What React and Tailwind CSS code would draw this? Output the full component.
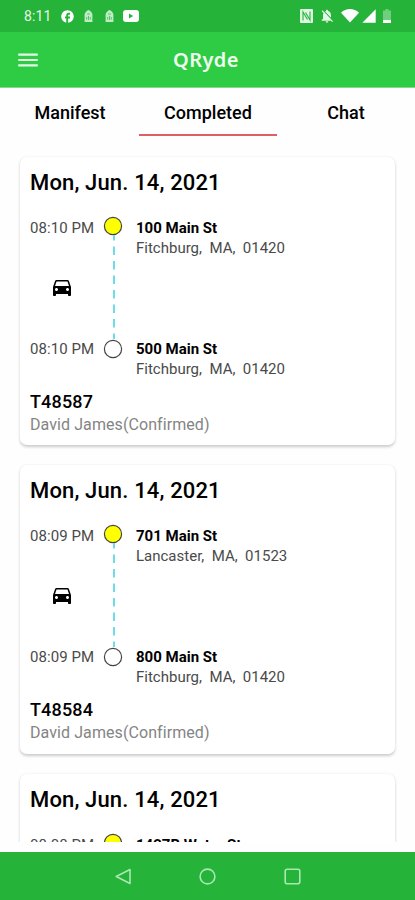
import React, { useState } from 'react';
import { MdDirectionsCar, MdMenu, MdNotificationsOff, MdSignalCellular4Bar, MdFacebook } from 'react-icons/md';

const TABS = ['Manifest', 'Completed', 'Chat'];

const TRIPS = [
  {
    id: 'T48587',
    date: 'Mon, Jun. 14, 2021',
    rider: 'David James(Confirmed)',
    pickup: { time: '08:10 PM', street: '100 Main St', city: 'Fitchburg,  MA,  01420' },
    dropoff: { time: '08:10 PM', street: '500 Main St', city: 'Fitchburg,  MA,  01420' },
  },
  {
    id: 'T48584',
    date: 'Mon, Jun. 14, 2021',
    rider: 'David James(Confirmed)',
    pickup: { time: '08:09 PM', street: '701 Main St', city: 'Lancaster,  MA,  01523' },
    dropoff: { time: '08:09 PM', street: '800 Main St', city: 'Fitchburg,  MA,  01420' },
  },
  {
    date: 'Mon, Jun. 14, 2021',
    pickup: { time: '08:08 PM', street: '1427B Water St' },
  },
];

const LockIcon = () => (
  <svg className="w-[9px] h-[12px]" viewBox="0 0 9 12">
    <path d="M4.5 0C6.4 .6 8.4 3 8.4 4.6V12H.6V4.6C.6 3 2.6.6 4.5 0z" fill="#bfecc5" />
    <path d="M3.2 4h2.6M4.5 6v4M2.7 7v2.5M6.3 7v2.5" stroke="#25b339" strokeWidth=".7" />
  </svg>
);

const StatusBar = () => (
  <div className="h-8 shrink-0 bg-[#25b339] flex items-center text-[#e4f8e7]">
    <span className="ml-6 w-[28px] text-[14px] leading-4 tracking-[0.1px] whitespace-nowrap">8:11</span>
    <MdFacebook className="ml-2 w-[15px] h-[15px] text-white" />
    <span className="ml-[9px]"><LockIcon /></span>
    <span className="ml-3"><LockIcon /></span>
    <svg className="ml-[9px] w-4 h-3" viewBox="0 0 16 12">
      <rect width="16" height="12" rx="3" fill="#fff" />
      <path d="M6 3.6v4.8L10.2 6z" fill="#25b339" />
    </svg>
    <div className="ml-auto mr-[24px] flex items-center">
      <svg className="w-[13px] h-[14px]" viewBox="0 0 13 14">
        <rect width="13" height="14" rx="1" fill="#dff6e2" />
        <path d="M3 11.5V3l4.5 7.5M10 2.5V11L5.5 3.5" fill="none" stroke="#25b339" strokeWidth="1.1" />
      </svg>
      <MdNotificationsOff className="ml-[6px] w-4 h-4" />
      <svg className="ml-[6px] w-[18px] h-[14px]" viewBox="0 0 18 14">
        <path d="M0 3.8C5-1.2 13-1.2 18 3.8L9 13.6z" fill="#fff" />
      </svg>
      <MdSignalCellular4Bar className="ml-[2px] w-4 h-4 text-white" />
      <svg className="ml-[6px] w-2 h-[14px]" viewBox="0 0 8 14">
        <path d="M2.5 0h3v1.5H8V14H0V1.5h2.5z" fill="#6fd07c" />
        <path d="M0 11h8v3H0z" fill="#fff" />
      </svg>
    </div>
  </div>
);

const Header = () => (
  <header className="relative h-14 shrink-0 bg-[#2ecc44] border-b border-[#7fdc8c] flex items-center justify-center">
    <button className="absolute left-[15px] text-[#e4fae7]">
      <MdMenu className="w-[26px] h-[26px]" />
    </button>
    <h1 className="mr-[3px] pt-px text-[20px] font-semibold text-[#effcf0] font-['Noto_Sans'] tracking-[0.4px]">QRyde</h1>
  </header>
);

const Stop = ({ stop, filled }) => (
  <div className="flex h-[43px]">
    <span className={`w-[73px] text-[15px] leading-[18px] tracking-[0.08px] text-[#4a4a4a] whitespace-nowrap ${filled ? 'pt-[3px]' : 'pt-px'}`}>
      {stop.time}
    </span>
    <svg className="w-5 h-5 shrink-0" viewBox="0 0 20 20">
      <circle cx="10" cy="10" r="8.6" fill={filled ? '#ffff00' : '#fff'} stroke="#444" strokeWidth="1.2" />
    </svg>
    <div className={`ml-[13px] whitespace-pre ${filled ? 'pt-[2px]' : ''}`}>
      <p className="text-[15px] leading-5 font-bold text-black">{stop.street}</p>
      {stop.city && <p className="text-[15px] leading-[21px] text-[#4a4a4a]">{stop.city}</p>}
    </div>
  </div>
);

const TripCard = ({ trip }) => (
  <article className="h-[288.4px] shrink-0 bg-white rounded-[7px] shadow-[0_1.5px_3px_rgba(0,0,0,0.2)] px-[10px] pt-[12px] mb-5">
    <h2 className="text-[22px] leading-7 font-medium tracking-[0.15px] text-black whitespace-nowrap">{trip.date}</h2>
    <div className="mt-[19px]">
      <Stop stop={trip.pickup} filled />
      {trip.dropoff && (
        <>
          <div className="flex h-[80px]">
            <div className="w-[64px] flex justify-center pt-[16px]">
              <MdDirectionsCar className="w-6 h-6 text-black" />
            </div>
            {/* Dashed route line, runs up to the pickup marker */}
            <svg className="ml-[19px] -mt-6 w-[2px] h-[104px]" viewBox="0 0 2 104">
              <path d="M1 0v104" stroke="#6ddbe8" strokeWidth="2" strokeDasharray="8.5 6" strokeDashoffset="3" />
            </svg>
          </div>
          <Stop stop={trip.dropoff} />
        </>
      )}
    </div>
    {trip.id && <p className="mt-[8px] text-[18px] leading-6 font-medium tracking-[0.15px] text-black">{trip.id}</p>}
    {trip.rider && <p className="text-[16px] leading-[22px] tracking-[0.08px] text-[#848484]">{trip.rider}</p>}
  </article>
);

const NavBar = () => (
  <div className="mt-[10px] h-12 pl-px shrink-0 bg-[#25b339] flex items-center justify-center gap-[68px] text-[#a9e8b2]">
    <svg className="w-4 h-[17px]" viewBox="0 0 16 17" fill="none" stroke="currentColor" strokeWidth="1.6" strokeLinejoin="round">
      <path d="M15 1.5v14L1.2 8.5z" />
    </svg>
    <svg className="w-[17px] h-[17px]" viewBox="0 0 17 17" fill="none" stroke="currentColor" strokeWidth="1.6">
      <circle cx="8.5" cy="8.5" r="7.4" />
    </svg>
    <svg className="w-[17px] h-[17px]" viewBox="0 0 17 17" fill="none" stroke="currentColor" strokeWidth="1.6">
      <rect x="1.2" y="1.2" width="14.6" height="14.6" rx="2" />
    </svg>
  </div>
);

const App = () => {
  const [activeTab, setActiveTab] = useState('Completed');

  return (
    <div className="w-[415px] h-[900px] flex flex-col overflow-hidden bg-[#fefefe] font-[Roboto,sans-serif]">
      <StatusBar />
      <Header />

      {/* Tabs */}
      <nav className="grid grid-cols-3 h-12 pl-px shrink-0">
        {TABS.map((tab) => (
          <button
            key={tab}
            onClick={() => setActiveTab(tab)}
            className={`pt-[3px] text-[18px] font-medium text-black border-b-2 ${activeTab === tab ? 'border-[#df6060]' : 'border-transparent'}`}
          >
            {tab}
          </button>
        ))}
      </nav>

      {/* Trip list */}
      <main className="flex-1 min-h-0 overflow-hidden flex flex-col px-5 pt-[21px]">
        {TRIPS.map((trip, index) => (
          <TripCard key={index} trip={trip} />
        ))}
      </main>

      <NavBar />
    </div>
  );
};

export default App;
